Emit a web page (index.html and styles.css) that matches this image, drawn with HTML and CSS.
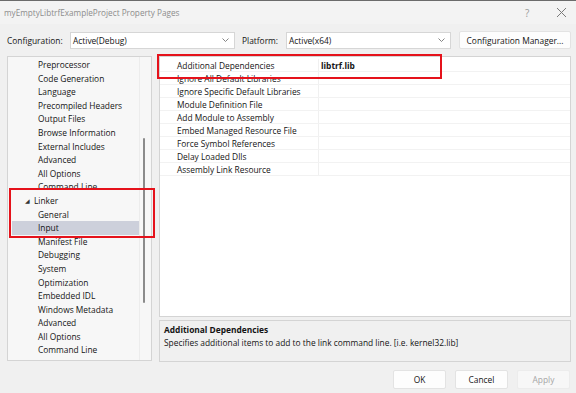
FILE: index.html
```html
<!DOCTYPE html>
<html lang="en">
<head>
<meta charset="utf-8">
<title>Property Pages</title>
<link rel="stylesheet" href="styles.css">
</head>
<body>
<div class="titlebar">
  <span class="title">myEmptyLibtrfExampleProject Property Pages</span>
  <span class="tb-help">?</span>
  <span class="tb-close">
    <svg width="11" height="11" viewBox="0 0 11 11"><path d="M1 1L10 10M10 1L1 10" stroke="#7a7a7a" stroke-width="1"/></svg>
  </span>
</div>

<div class="toolbar">
  <span class="label">Configuration:</span>
  <div class="combo combo-config">
    <span>Active(Debug)</span>
    <svg class="chev" width="7" height="4" viewBox="0 0 7 4"><path d="M0.5 0.5L3.5 3.5L6.5 0.5" fill="none" stroke="#777" stroke-width="0.9"/></svg>
  </div>
  <span class="label label-platform">Platform:</span>
  <div class="combo combo-platform">
    <span>Active(x64)</span>
    <svg class="chev" width="7" height="4" viewBox="0 0 7 4"><path d="M0.5 0.5L3.5 3.5L6.5 0.5" fill="none" stroke="#777" stroke-width="0.9"/></svg>
  </div>
  <button class="btn btn-manager">Configuration Manager...</button>
</div>

<div class="main">
  <div class="tree">
    <ul class="tree-list">
      <li class="child">Preprocessor</li>
      <li class="child">Code Generation</li>
      <li class="child">Language</li>
      <li class="child">Precompiled Headers</li>
      <li class="child">Output Files</li>
      <li class="child">Browse Information</li>
      <li class="child">External Includes</li>
      <li class="child">Advanced</li>
      <li class="child">All Options</li>
      <li class="child">Command Line</li>
      <li class="group"><span class="tri">&#9698;</span>Linker</li>
      <li class="child">General</li>
      <li class="child selected">Input</li>
      <li class="child">Manifest File</li>
      <li class="child">Debugging</li>
      <li class="child">System</li>
      <li class="child">Optimization</li>
      <li class="child">Embedded IDL</li>
      <li class="child">Windows Metadata</li>
      <li class="child">Advanced</li>
      <li class="child">All Options</li>
      <li class="child">Command Line</li>
      <li class="group"><span class="tri tri-closed">&#9656;</span>Manifest Tool</li>
    </ul>
    <div class="scroll"><div class="thumb"></div></div>
  </div>
  <div class="mark mark-tree"></div>

  <div class="right">
    <div class="grid">
      <div class="row first"><span class="name">Additional Dependencies</span><span class="value">libtrf.lib</span></div>
      <div class="row"><span class="name">Ignore All Default Libraries</span><span class="value"></span></div>
      <div class="row"><span class="name">Ignore Specific Default Libraries</span><span class="value"></span></div>
      <div class="row"><span class="name">Module Definition File</span><span class="value"></span></div>
      <div class="row"><span class="name">Add Module to Assembly</span><span class="value"></span></div>
      <div class="row"><span class="name">Embed Managed Resource File</span><span class="value"></span></div>
      <div class="row"><span class="name">Force Symbol References</span><span class="value"></span></div>
      <div class="row"><span class="name">Delay Loaded Dlls</span><span class="value"></span></div>
      <div class="row"><span class="name">Assembly Link Resource</span><span class="value"></span></div>
      <div class="mark mark-grid"></div>
    </div>
    <div class="desc">
      <div class="desc-title">Additional Dependencies</div>
      <div class="desc-text">Specifies additional items to add to the link command line. [i.e. kernel32.lib]</div>
    </div>
  </div>
</div>

<div class="footer">
  <button class="btn">OK</button>
  <button class="btn">Cancel</button>
  <button class="btn disabled">Apply</button>
</div>
</body>
</html>
```

FILE: styles.css
```css
body {
	margin: 0;
	width: 576px;
	height: 393px;
	overflow: hidden;
	background: #f0f0f0;
	font-family: "Open Sans", "Noto Sans", sans-serif;
	font-size: 8.4px;
	color: #141414;
}

.titlebar {
	height: 24px;
	display: flex;
	align-items: center;
	padding-left: 4px;
	background: #f3f3f3;
	border-top: 1px solid #6b6b6b;
	box-sizing: border-box;
}
.title {
	color: #8c8c8c;
	font-size: 8.2px;
	flex: 1;
}
.tb-help {
	color: #9a9a9a;
	font-size: 10px;
	width: 31px;
}
.tb-close {
	width: 20px;
	display: flex;
	align-items: center;
}

.toolbar {
	display: flex;
	align-items: center;
	height: 18px;
	margin-top: 7px;
	padding-left: 7px;
}
.label {
	width: 63px;
}
.label-platform {
	width: 44px;
	margin-left: 7px;
}
.combo {
	box-sizing: border-box;
	height: 17px;
	width: 165px;
	background: #fff;
	border: 1px solid #d6d6d6;
	display: flex;
	align-items: center;
	justify-content: space-between;
	padding: 0 5px 0 2px;
}
.chev {
	display: block;
}
.btn {
	box-sizing: border-box;
	font-family: inherit;
	font-size: 8.4px;
	color: #141414;
	background: #fdfdfd;
	border: 1px solid #e3e3e3;
	border-radius: 2px;
	height: 19px;
	width: 53px;
	padding: 0;
}
.btn-manager {
	width: 112px;
	margin-left: 8px;
	height: 18px;
}
.btn.disabled {
	color: #a5a5a5;
	background: #f7f7f7;
	border-color: #ececec;
}

.main {
	position: relative;
	display: flex;
	margin-top: 7px;
	padding: 0 5px 0 7px;
}

.tree {
	box-sizing: border-box;
	width: 145px;
	height: 305px;
	background: #f7f7f7;
	border: 1px solid #d4d4d4;
	overflow: hidden;
	display: flex;
}
.tree-list {
	list-style: none;
	margin: 0;
	padding: 1px 0 0 0;
	flex: 1;
}
.tree-list li {
	height: 13.6px;
	line-height: 13.6px;
	white-space: nowrap;
	margin-left: 4px;
}
.tree-list .child {
	padding-left: 26px;
}
.tree-list .group {
	padding-left: 13px;
}
.tri {
	display: inline-block;
	width: 9px;
	font-size: 6px;
	color: #333;
	vertical-align: 1px;
}
.tree-list .selected {
	background: #cdd0db;
}
.scroll {
	width: 11px;
	border-left: 1px solid #ececec;
	position: relative;
}
.thumb {
	position: absolute;
	left: 3px;
	top: 81px;
	width: 2px;
	height: 165px;
	background: #8b8b8b;
	border-radius: 1px;
}

.right {
	flex: 1;
	margin-left: 7px;
	display: flex;
	flex-direction: column;
}
.grid {
	position: relative;
	box-sizing: border-box;
	height: 261px;
	background: #fff;
	border: 1px solid #d4d4d4;
	padding-top: 2px;
}
.row {
	display: flex;
	height: 13px;
	line-height: 13px;
	border-bottom: 1px solid #f2f2f2;
	box-sizing: border-box;
}
.name {
	width: 141px;
	padding-left: 17px;
	border-right: 1px solid #f0f0f0;
	white-space: nowrap;
	overflow: hidden;
}
.value {
	padding-left: 2px;
	font-weight: bold;
}
.desc {
	box-sizing: border-box;
	margin-top: 3px;
	height: 42px;
	border: 1px solid #d4d4d4;
	background: #f0f0f0;
	padding: 2px 4px;
}
.desc-title {
	font-weight: bold;
	line-height: 13px;
}
.desc-text {
	line-height: 13px;
}

.mark {
	position: absolute;
	border: 2px solid #e5121b;
	box-sizing: border-box;
}
.mark-tree {
	left: 9px;
	top: 132px;
	width: 146px;
	height: 50px;
}
.mark-grid {
	left: -3px;
	top: -3px;
	width: 285px;
	height: 25px;
}

.footer {
	display: flex;
	justify-content: flex-end;
	gap: 9px;
	margin-top: 8px;
	padding-right: 6px;
}
```
